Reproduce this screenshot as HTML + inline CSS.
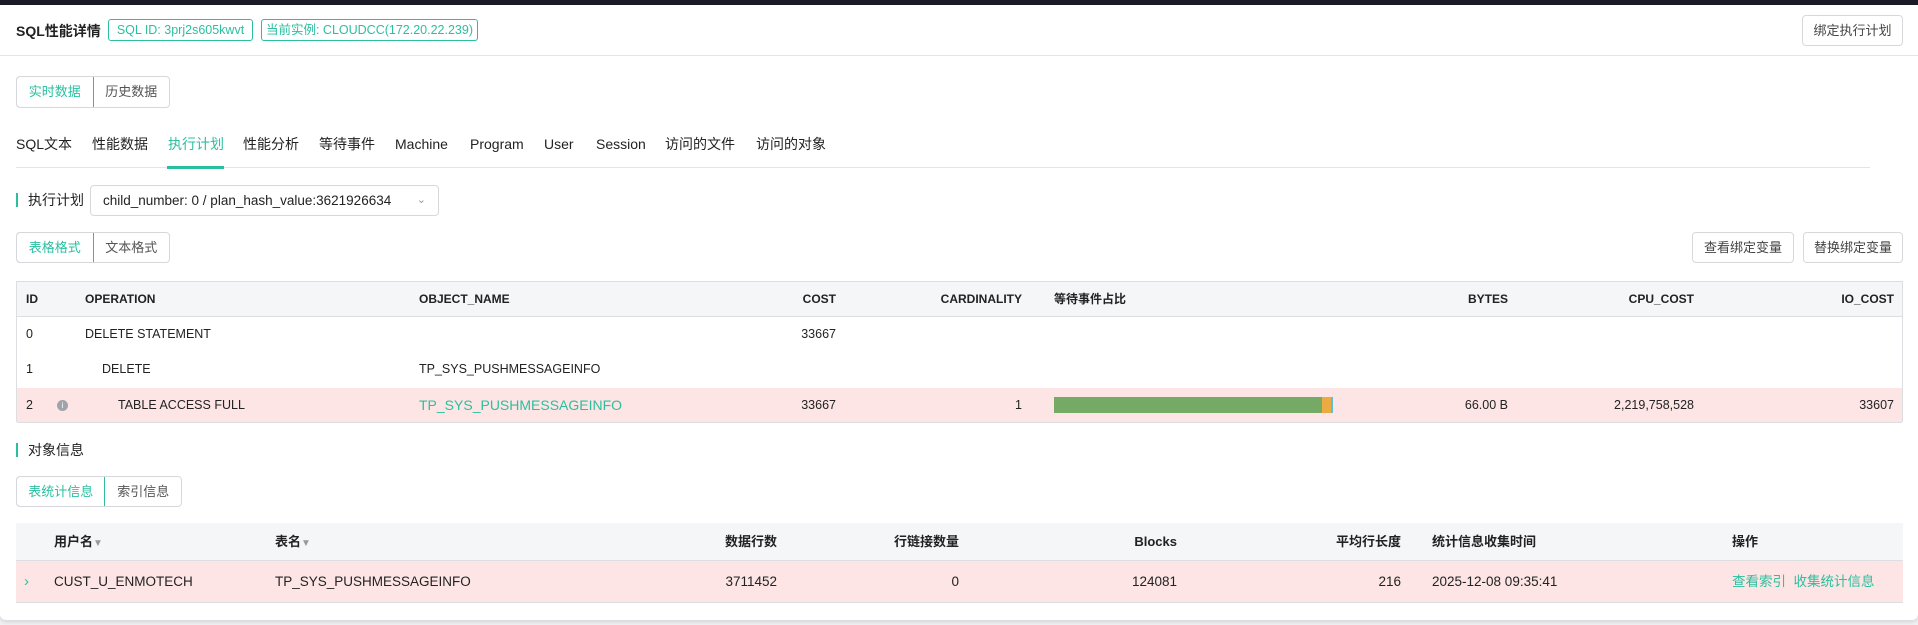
<!DOCTYPE html>
<html><head><meta charset="utf-8"><style>
*{box-sizing:border-box;margin:0;padding:0}
body{width:1918px;height:625px;background:#f0f1f3;font-family:"Liberation Sans","Noto Sans CJK SC",sans-serif;font-size:14px;color:#222;position:relative;overflow:hidden}
.card{position:absolute;left:0;top:5px;width:1918px;height:615px;background:#fff;border-radius:0 0 6px 6px;box-shadow:0 2px 4px rgba(0,0,0,.12)}
.top{position:absolute;left:0;top:0;width:1918px;height:5px;background:#1a1b26}
.a{position:absolute;white-space:nowrap}
.tag{position:absolute;border:1px solid #2bbf9f;color:#2bbf9f;border-radius:3px;height:22px;line-height:20px;font-size:12.5px;text-align:center;white-space:nowrap;overflow:hidden}
.btn{position:absolute;border:1px solid #d6d8dc;border-radius:4px;background:#fff;color:#444;font-size:13px;text-align:center;white-space:nowrap}
.seg{position:absolute;border:1px solid #d6d8dc;border-radius:4px;display:flex;font-size:13px;overflow:hidden}
.seg div{text-align:center;color:#555}
.seg .on{border:1px solid #2bbf9f;color:#2bbf9f;border-radius:4px 0 0 4px;margin:-1px 0 -1px -1px}
.tab{position:absolute;top:134px;font-size:14px;line-height:20px;color:#222;white-space:nowrap}
.lbl{position:absolute;font-size:14px;color:#222;padding-left:10px;border-left:2px solid #2bbf9f;line-height:14px}
.tbl{position:absolute;left:16px;width:1887px;border:1px solid #dcdee2;border-bottom:none}
.row{position:absolute;left:0;width:100%;border-bottom:1px solid #dcdee2;font-size:12.5px}
.hd{background:#f5f6f8;font-weight:bold;font-size:12px}
.pink{background:#fde5e5}
.c{position:absolute;white-space:nowrap}
.r{position:absolute;white-space:nowrap;transform:translateX(-100%)}
</style></head><body>
<div class="top"></div>
<div class="card"></div>
<div class="a" style="left:16px;top:21px;font-size:14px;font-weight:bold">SQL性能详情</div>
<div class="tag" style="left:108px;top:19px;width:145px">SQL ID: 3prj2s605kwvt</div>
<div class="tag" style="left:261px;top:19px;width:217px">当前实例: CLOUDCC(172.20.22.239)</div>
<div class="btn" style="left:1802px;top:15px;width:101px;height:31px;line-height:29px">绑定执行计划</div>
<div class="a" style="left:0;top:55px;width:1918px;height:1px;background:#e2e4e8"></div>
<div class="seg" style="left:16px;top:76px;width:154px;height:32px;line-height:30px"><div class="on" style="width:78px">实时数据</div><div style="width:76px">历史数据</div></div>
<div class="tab" style="left:16px">SQL文本</div>
<div class="tab" style="left:92px">性能数据</div>
<div class="tab" style="left:168px;color:#2bbf9f">执行计划</div>
<div class="tab" style="left:243px">性能分析</div>
<div class="tab" style="left:319px">等待事件</div>
<div class="tab" style="left:395px">Machine</div>
<div class="tab" style="left:470px">Program</div>
<div class="tab" style="left:544px">User</div>
<div class="tab" style="left:596px">Session</div>
<div class="tab" style="left:665px">访问的文件</div>
<div class="tab" style="left:756px">访问的对象</div>
<div class="a" style="left:16px;top:167px;width:1854px;height:1px;background:#e2e4e8"></div>
<div class="a" style="left:167px;top:166px;width:57px;height:3px;background:#2bbf9f"></div>
<div class="lbl" style="left:16px;top:193px">执行计划</div>
<div class="btn" style="left:90px;top:185px;width:349px;height:31px;line-height:29px;text-align:left;padding-left:12px;color:#222;font-size:13.5px">child_number: 0 / plan_hash_value:3621926634<span style="position:absolute;right:12px;color:#999;font-size:11px">&#8964;</span></div>
<div class="seg" style="left:16px;top:232px;width:154px;height:31px;line-height:29px"><div class="on" style="width:78px">表格格式</div><div style="width:76px">文本格式</div></div>
<div class="btn" style="left:1692px;top:232px;width:102px;height:31px;line-height:29px">查看绑定变量</div>
<div class="btn" style="left:1803px;top:232px;width:100px;height:31px;line-height:29px">替换绑定变量</div>
<div class="tbl" style="top:281px;height:141px">
 <div class="row hd" style="top:0;height:35px;line-height:34px">
  <span class="c" style="left:9px">ID</span><span class="c" style="left:68px">OPERATION</span><span class="c" style="left:402px">OBJECT_NAME</span><span class="r" style="left:819px">COST</span><span class="r" style="left:1005px">CARDINALITY</span><span class="c" style="left:1037px">等待事件占比</span><span class="r" style="left:1491px">BYTES</span><span class="r" style="left:1677px">CPU_COST</span><span class="r" style="left:1877px">IO_COST</span>
 </div>
 <div class="row" style="top:35px;height:35px;line-height:34px;border-bottom:none"><span class="c" style="left:9px">0</span><span class="c" style="left:68px">DELETE STATEMENT</span><span class="r" style="left:819px">33667</span></div>
 <div class="row" style="top:70px;height:36px;line-height:35px;border-bottom:none"><span class="c" style="left:9px">1</span><span class="c" style="left:85px">DELETE</span><span class="c" style="left:402px">TP_SYS_PUSHMESSAGEINFO</span></div>
 <div class="row pink" style="top:106px;height:35px;line-height:34px"><span class="c" style="left:9px">2</span><span class="c" style="left:40px;top:12px;width:11px;height:11px;border-radius:50%;background:#a0a4aa;color:#fff;font-size:8px;line-height:11px;text-align:center">i</span><span class="c" style="left:101px">TABLE ACCESS FULL</span><span class="c" style="left:402px;color:#2bbf9f;font-size:14px">TP_SYS_PUSHMESSAGEINFO</span><span class="r" style="left:819px">33667</span><span class="r" style="left:1005px">1</span>
  <span class="c" style="left:1037px;top:9px;width:268px;height:16px;background:#74a966"></span><span class="c" style="left:1305px;top:9px;width:9px;height:16px;background:#ecab42"></span><span class="c" style="left:1314px;top:9px;width:2px;height:16px;background:#5bc0de"></span>
  <span class="r" style="left:1491px">66.00 B</span><span class="r" style="left:1677px">2,219,758,528</span><span class="r" style="left:1877px">33607</span></div>
</div>
<div class="lbl" style="left:16px;top:443px">对象信息</div>
<div class="seg" style="left:16px;top:476px;width:166px;height:31px;line-height:29px"><div class="on" style="width:90px">表统计信息</div><div style="width:76px">索引信息</div></div>
<div class="a" style="left:16px;top:523px;width:1887px;height:80px">
 <div class="row hd" style="top:0;height:38px;line-height:38px;font-size:13px;border-bottom:1px solid #dcdee2">
  <span class="c" style="left:38px">用户名<span style="color:#999;font-size:10px">▼</span></span><span class="c" style="left:259px">表名<span style="color:#999;font-size:10px">▼</span></span><span class="r" style="left:761px">数据行数</span><span class="r" style="left:943px">行链接数量</span><span class="r" style="left:1161px">Blocks</span><span class="r" style="left:1385px">平均行长度</span><span class="c" style="left:1416px">统计信息收集时间</span><span class="c" style="left:1716px">操作</span>
 </div>
 <div class="row pink" style="top:38px;height:42px;line-height:41px;font-size:13.5px">
  <span class="c" style="left:8px;color:#2bbf9f;font-size:15px">›</span><span class="c" style="left:38px">CUST_U_ENMOTECH</span><span class="c" style="left:259px">TP_SYS_PUSHMESSAGEINFO</span><span class="r" style="left:761px">3711452</span><span class="r" style="left:943px">0</span><span class="r" style="left:1161px">124081</span><span class="r" style="left:1385px">216</span><span class="c" style="left:1416px">2025-12-08 09:35:41</span><span class="c" style="left:1716px;color:#2bbf9f">查看索引&nbsp;&nbsp;收集统计信息</span>
 </div>
</div>
</body></html>
